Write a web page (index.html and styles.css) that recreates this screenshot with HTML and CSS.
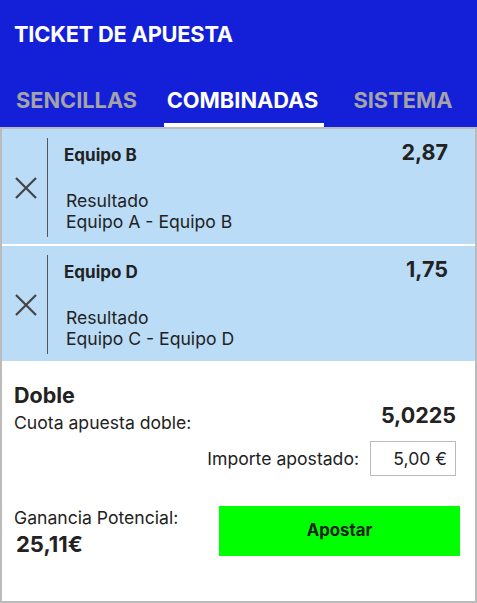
FILE: index.html
```html
<!DOCTYPE html>
<html lang="es">
<head>
<meta charset="utf-8">
<link rel="stylesheet" href="styles.css">
</head>
<body>
<div class="ticket">
  <header class="header">
    <h1 class="title">TICKET DE APUESTA</h1>
    <nav class="tabs">
      <span class="tab tab-1">SENCILLAS</span>
      <span class="tab tab-2 active">COMBINADAS</span>
      <span class="tab tab-3">SISTEMA</span>
    </nav>
  </header>
  <main class="body">
    <div class="bet">
      <div class="remove">
        <svg width="24" height="24" viewBox="0 0 24 24"><path d="M2 2 L22 22 M22 2 L2 22" stroke="#444" stroke-width="2.2" fill="none"/></svg>
      </div>
      <div class="divider"></div>
      <div class="info">
        <div class="top-row">
          <span class="team">Equipo B</span>
          <span class="odd">2,87</span>
        </div>
        <div class="market">Resultado</div>
        <div class="match">Equipo A - Equipo B</div>
      </div>
    </div>
    <div class="bet">
      <div class="remove">
        <svg width="24" height="24" viewBox="0 0 24 24"><path d="M2 2 L22 22 M22 2 L2 22" stroke="#444" stroke-width="2.2" fill="none"/></svg>
      </div>
      <div class="divider"></div>
      <div class="info">
        <div class="top-row">
          <span class="team">Equipo D</span>
          <span class="odd">1,75</span>
        </div>
        <div class="market">Resultado</div>
        <div class="match">Equipo C - Equipo D</div>
      </div>
    </div>
    <section class="summary">
      <div class="type">Doble</div>
      <div class="quota-row">
        <span class="quota-label">Cuota apuesta doble:</span>
        <span class="quota">5,0225</span>
      </div>
      <div class="amount-row">
        <span class="amount-label">Importe apostado:</span>
        <span class="amount-box">5,00 €</span>
      </div>
      <div class="footer-row">
        <div class="gain">
          <div class="gain-label">Ganancia Potencial:</div>
          <div class="gain-value">25,11€</div>
        </div>
        <button class="bet-btn">Apostar</button>
      </div>
    </section>
  </main>
</div>
</body>
</html>
```

FILE: styles.css
```css
* { box-sizing: border-box; }
html, body { margin: 0; padding: 0; }
body {
  font-family: Inter, "Liberation Sans", sans-serif;
  color: #222;
  background: #fff;
  width: 477px;
  height: 603px;
}
.ticket {
  width: 477px;
  height: 603px;
  display: flex;
  flex-direction: column;
}
.header {
  background: #1420d8;
  height: 127px;
  display: flex;
  flex-direction: column;
}
.title {
  margin: 0;
  padding: 22px 0 0 14px;
  height: 62px;
  font-size: 21.8px;
  line-height: 24px;
  font-weight: 700;
  color: #fff;
  letter-spacing: -0.2px;
}
.tabs {
  display: flex;
  height: 65px;
  align-items: stretch;
}
.tab {
  font-size: 21.8px;
  line-height: 26px;
  font-weight: 700;
  color: #a3a3a8;
  display: flex;
  align-items: center;
  justify-content: center;
  padding-top: 14px;
  border-bottom: 4px solid transparent;
}
.tab-1 { margin-left: 13px; width: 127px; }
.tab-2 { margin-left: 24px; width: 160px; padding-right: 3px; }
.tab-3 { margin-left: 27px; width: 104px; }
.tab.active { color: #fff; border-bottom-color: #fff; }
.body {
  flex: 1;
  border: 2px solid #bbb;
  display: flex;
  flex-direction: column;
}
.bet {
  background: #bbdcf7;
  height: 115px;
  display: flex;
  padding: 9px 0 7px;
}
.bet + .bet { margin-top: 2px; }
.remove {
  width: 45px;
  display: flex;
  align-items: center;
  justify-content: center;
  padding-left: 2px;
}
.divider {
  width: 1px;
  background: #555;
}
.info {
  flex: 1;
  padding: 7px 27px 0 16px;
}
.top-row {
  display: flex;
  justify-content: space-between;
  align-items: flex-start;
  height: 22px;
}
.team { font-size: 17px; line-height: 20px; font-weight: 700; }
.odd { font-size: 21.5px; line-height: 24px; font-weight: 700; margin-top: -5px; }
.market { font-size: 17.6px; line-height: 21px; margin-top: 23px; padding-left: 2px; }
.match { font-size: 17.6px; line-height: 21px; padding-left: 2px; }
.summary {
  flex: 1;
  padding: 22px 19px 0 12px;
}
.type { font-size: 21.5px; line-height: 24px; font-weight: 700; }
.quota-row {
  display: flex;
  justify-content: space-between;
  align-items: flex-end;
  margin-top: -4px;
}
.quota-label { font-size: 17.6px; line-height: 20px; }
.quota { font-size: 21.5px; line-height: 24px; font-weight: 700; margin-bottom: 6px; }
.amount-row {
  display: flex;
  justify-content: flex-end;
  align-items: center;
  gap: 11px;
  margin-top: 8px;
}
.amount-label { font-size: 17.6px; line-height: 20px; }
.amount-box {
  width: 86px;
  height: 35px;
  border: 1px solid #bbb;
  font-size: 17.6px;
  display: flex;
  align-items: center;
  justify-content: flex-end;
  padding-right: 8px;
}
.footer-row {
  display: flex;
  justify-content: space-between;
  align-items: flex-start;
  margin-top: 30px;
}
.gain { padding-top: 2px; }
.gain-label { font-size: 17.6px; line-height: 20px; }
.gain-value { font-size: 22px; line-height: 26px; font-weight: 700; margin-top: 3px; padding-left: 2px; }
.bet-btn {
  width: 241px;
  height: 50px;
  background: #00ff00;
  border: none;
  padding: 0 0 2px;
  font-family: Inter, "Liberation Sans", sans-serif;
  font-size: 16.8px;
  font-weight: 700;
  color: #222;
  margin-right: -4px;
}
```
